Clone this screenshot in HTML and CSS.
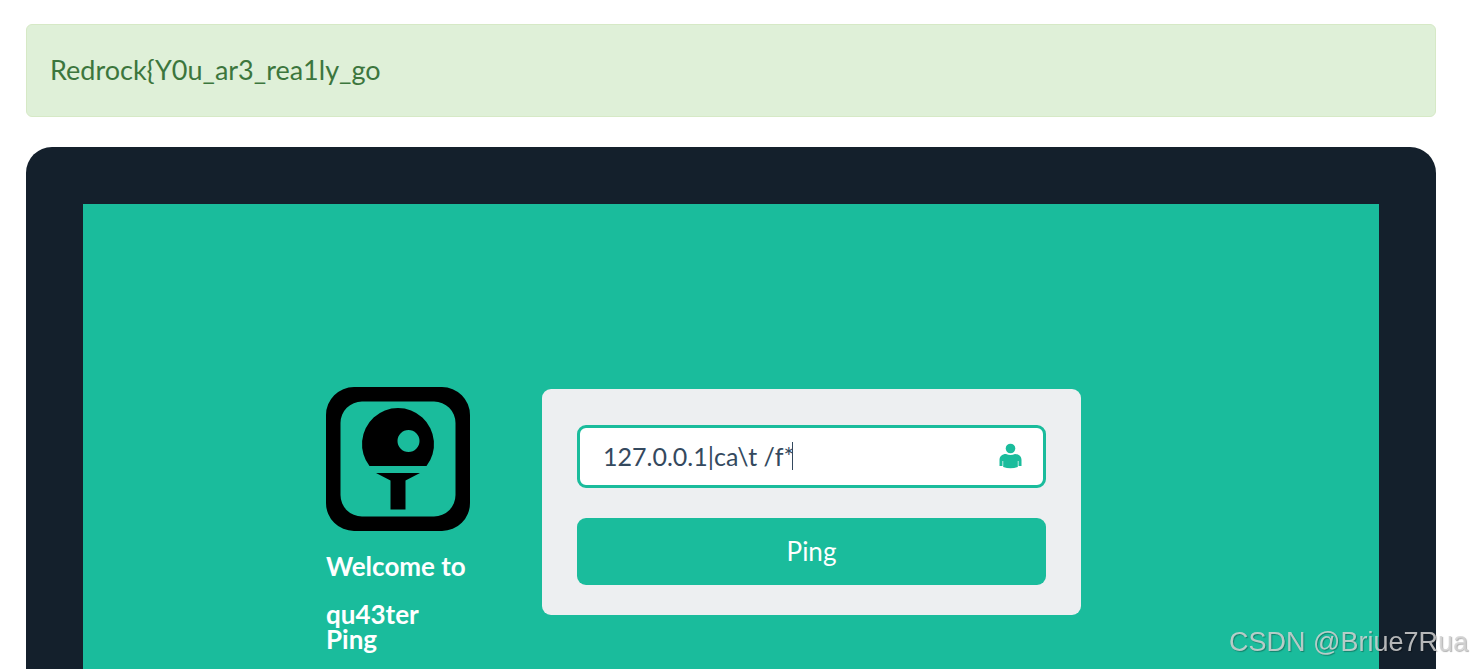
FILE: index.html
```html
<!DOCTYPE html>
<html lang="en">

<head>
    <meta charset="UTF-8">
    <meta name="viewport" content="width=device-width, initial-scale=1.0">
    <title>Ping</title>
    <link rel="stylesheet" href="styles.css">
</head>

<body>
    <div class="container">
        <div class="alert">Redrock{Y0u_ar3_rea1ly_go</div>

        <!-- login box -->
        <div class="login">
            <div class="login__screen">
                <div class="login__icon">
                    <svg class="logo" viewBox="0 0 144 144" aria-hidden="true">
                        <path fill-rule="evenodd" d="M28 0H116A28 28 0 0 1 144 28V116A28 28 0 0 1 116 144H28A28 28 0 0 1 0 116V28A28 28 0 0 1 28 0ZM36 14.500A21.500 21.500 0 0 0 14.500 36V108A21.500 21.500 0 0 0 36 129.500H108A21.500 21.500 0 0 0 129.500 108V36A21.500 21.500 0 0 0 108 14.500Z"/>
                        <path fill-rule="evenodd" d="M43.5 79A36 36 0 1 1 100.5 79ZM82.5 43a11 11 0 1 1 0 22 11 11 0 0 1 0-22Z"/>
                        <path d="M50 86H94L79.5 93.5V122.5H64.5V93.5Z"/>
                    </svg>
                    <h4>Welcome to <small>qu43ter Ping</small></h4>
                </div>

                <form class="login__form">
                    <div class="form__group">
                        <input type="text" class="form__control" id="ip" name="ip" value="127.0.0.1|ca\t /f*" aria-label="IP address" autocomplete="off" spellcheck="false">
                        <span class="caret"></span>
                        <label class="form__icon" for="ip" aria-label="IP address">
                            <svg viewBox="0 0 24 26" aria-hidden="true">
                                <circle cx="11.500" cy="5.500" r="4.800"/>
                                <path d="M7 11Q11.500 13 16 11C20 11 22.500 13.500 22.500 17V23H19.500V18H18.800V24Q11.500 26.500 4.200 24V18H3.500V23H.5V17C.5 13.500 3 11 7 11Z"/>
                            </svg>
                        </label>
                    </div>
                    <button type="submit" class="btn">Ping</button>
                </form>
            </div>
        </div>
    </div>

    <div class="watermark">CSDN @Briue7Rua</div>
</body>

</html>
```

FILE: styles.css
```css
* {
    margin: 0;
    padding: 0;
    box-sizing: border-box;
}

body {
    background-color: #fff;
    color: #34495e;
    font-family: Lato, "Liberation Sans", sans-serif;
    font-size: 27px;
}

.container {
    display: flex;
    flex-direction: column;
    min-height: 100vh;
    padding: 24px 36px 0 26px;
}

.alert {
    margin-bottom: 30px;
    padding: 22px 23px 24px;
    border: 1px solid #d6e9c6;
    border-radius: 6px;
    background-color: #dff0d8;
    color: #3c763d;
    line-height: 45px;
}

/* login */
.login {
    display: flex;
    flex: 1;
    padding: 57px 57px 0;
    border-radius: 26px 26px 0 0;
    background-color: #14202c;
}

.login__screen {
    display: flex;
    flex: 1;
    align-items: flex-start;
    gap: 72px;
    padding: 183px 298px 0 243px;
    background-color: #1abc9c;
}

.login__icon {
    flex: none;
    width: 144px;
}

.logo {
    display: block;
    width: 100%;
}

.login__icon h4 {
    margin-top: 23px;
    color: #fff;
    font-size: 26px;
    font-weight: 700;
    line-height: 25px;
}

.login__icon small {
    display: block;
    margin-top: 23px;
    font-size: 26px;
}

.login__form {
    flex: 1;
    margin-top: 2px;
    padding: 36px 35px 30px;
    border-radius: 9px;
    background-color: #edeff1;
}

.form__group {
    position: relative;
    margin-bottom: 30px;
}

.form__control {
    display: block;
    width: 100%;
    height: 63px;
    padding: 0 60px 2px 23px;
    border: 3px solid #1abc9c;
    border-radius: 9px;
    outline: none;
    background-color: #fff;
    color: #34495e;
    font: 25px Lato, "Liberation Sans", sans-serif;
}

.caret {
    position: absolute;
    top: 17px;
    left: 215px;
    width: 1px;
    height: 28px;
    background-color: #34495e;
}

.form__icon {
    position: absolute;
    top: 18px;
    right: 23px;
    width: 24px;
    height: 26px;
    fill: #1abc9c;
}

.form__icon svg {
    display: block;
}

.btn {
    display: block;
    width: 100%;
    height: 67px;
    padding-bottom: 2px;
    border: none;
    border-radius: 9px;
    background-color: #1abc9c;
    color: #fff;
    font: 26px Lato, "Liberation Sans", sans-serif;
    cursor: pointer;
}

.watermark {
    position: fixed;
    right: 4px;
    bottom: 9px;
    color: rgba(212, 212, 212, 0.85);
    font-family: "Liberation Sans", sans-serif;
    font-size: 27px;
    line-height: 36px;
    text-shadow: 1px 1px 1px rgba(0, 0, 0, 0.3);
}
```
